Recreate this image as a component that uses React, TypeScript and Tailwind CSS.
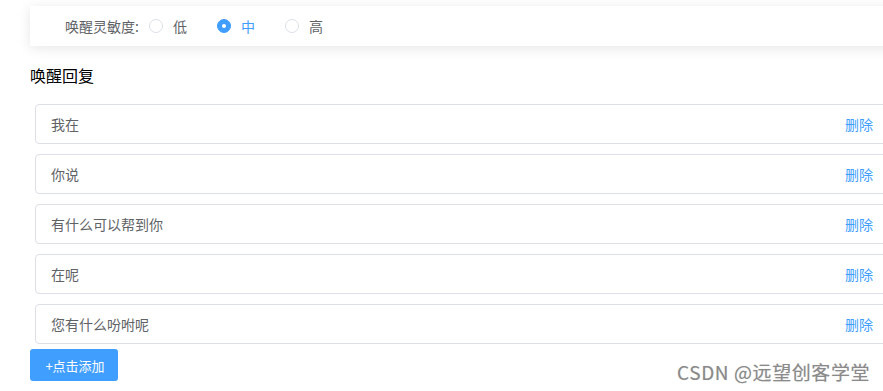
import React from "react";

const font = { fontFamily: '"Noto Sans CJK SC", "Noto Sans", sans-serif' };

const replies = ["我在", "你说", "有什么可以帮到你", "在呢", "您有什么吩咐呢"];

function Radio({ label, checked }: { label: string; checked?: boolean }) {
  return (
    <div className="flex items-center">
      {checked ? (
        <span className="w-[14px] h-[14px] rounded-full bg-[#409eff] border border-[#409eff] flex items-center justify-center">
          <span className="w-[4px] h-[4px] rounded-full bg-white" />
        </span>
      ) : (
        <span className="w-[14px] h-[14px] rounded-full border border-[#dcdfe6] bg-white" />
      )}
      <span className={`ml-[10px] text-[14px] leading-none ${checked ? "text-[#409eff]" : "text-[#606266]"}`}>{label}</span>
    </div>
  );
}

export default function App() {
  return (
    <div className="relative w-[883px] h-[391px] overflow-hidden bg-white" style={font}>
      <div className="pt-[6px] pl-[30px]">
        <div className="w-[880px] h-[40px] bg-white shadow-[0_2px_12px_0_rgba(0,0,0,0.1)] flex items-center pl-[35px]">
          <span className="text-[14px] text-[#606266] leading-none mr-[10px]">唤醒灵敏度:</span>
          <div className="flex items-center gap-[30px]">
            <Radio label="低" />
            <Radio label="中" checked />
            <Radio label="高" />
          </div>
        </div>
        <div className="mt-[18px] text-[16px] leading-[22px] text-black">唤醒回复</div>
        <div className="mt-[18px] ml-[5px] flex flex-col gap-[10px]">
          {replies.map((r) => (
            <div
              key={r}
              className="w-[853px] h-[40px] border border-[#dcdfe6] rounded-[4px] flex items-center justify-between pl-[15px] pr-[14px]"
            >
              <span className="text-[14px] text-[#606266] leading-none">{r}</span>
              <span className="text-[14px] text-[#409eff] leading-none">删除</span>
            </div>
          ))}
        </div>
        <button className="mt-[5px] w-[88px] h-[32px] rounded-[3px] bg-[#409eff] text-white text-[13px] leading-none flex items-center justify-center pl-[2px]">
          +点击添加
        </button>
      </div>
      <div className="absolute left-[677px] top-[359px] text-[19px] leading-[25px] tracking-[0.6px] text-[#8a8a8a] [text-shadow:0_0_1px_rgba(0,0,0,0.2)]">
        CSDN @远望创客学堂
      </div>
    </div>
  );
}
